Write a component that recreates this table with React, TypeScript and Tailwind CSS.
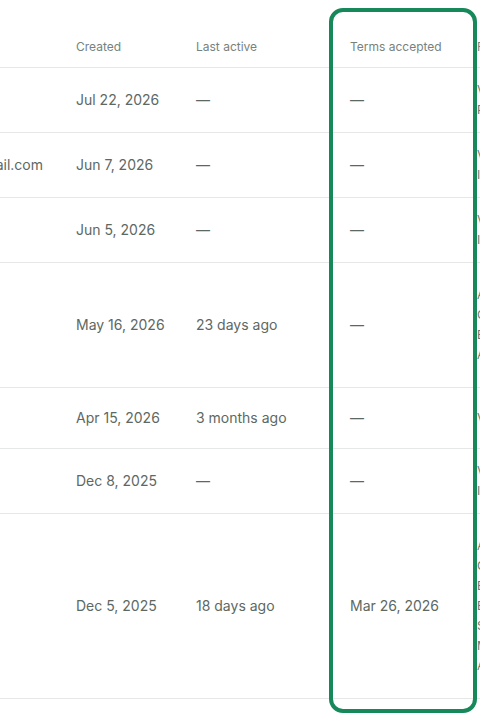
const rows = [
  { email: 'ana@acme.io', created: 'Jul 22, 2026', active: '—', terms: '—', h: 'h-[65px]', notes: ['Viewer', 'Pending'] },
  { email: 'jordan.lee@gmail.com', created: 'Jun 7, 2026', active: '—', terms: '—', h: 'h-[65px]', notes: ['Viewer', 'Invited'] },
  { email: 'li@studio.co', created: 'Jun 5, 2026', active: '—', terms: '—', h: 'h-[65px]', notes: ['Viewer', 'Invited'] },
  { email: 'mk@corp.io', created: 'May 16, 2026', active: '23 days ago', terms: '—', h: 'h-[125px]', notes: ['Admin', 'Owner', 'Billing', 'Active'] },
  { email: 'sam@web.dev', created: 'Apr 15, 2026', active: '3 months ago', terms: '—', h: 'h-[61px]', notes: ['Viewer'] },
  { email: 'tom@mail.io', created: 'Dec 8, 2025', active: '—', terms: '—', h: 'h-[65px]', notes: ['Viewer', 'Invited'] },
  { email: 'eve@team.app', created: 'Dec 5, 2025', active: '18 days ago', terms: 'Mar 26, 2026', h: 'h-[185px]', notes: ['Admin', 'Owner', 'Editor', 'Billing', 'Support', 'Member', 'Active'] },
]

export default function App() {
  return (
    <div className="relative w-[480px] h-[720px] overflow-hidden bg-white font-['Inter',sans-serif]">
      <div className="ml-[-120px] w-[760px]">
        {/* header */}
        <div className="flex h-[68px] items-end border-b border-[#e6e8e7] pb-[12px] text-xs text-[#78827d]">
          <div className="w-[180px] pl-4">Email</div>
          <div className="w-[120px] pl-4">Created</div>
          <div className="w-[154px] pl-4">Last active</div>
          <div className="w-[127px] pl-4">Terms accepted</div>
          <div className="flex-1 pl-4">Role</div>
        </div>

        {rows.map((r) => (
          <div key={r.created} className={`flex items-center border-b border-[#e6e8e7] text-sm text-[#5d6863] ${r.h}`}>
            <div className="w-[180px] pl-4 whitespace-nowrap">{r.email}</div>
            <div className="w-[120px] pl-4">{r.created}</div>
            <div className="w-[154px] pl-4">{r.active}</div>
            <div className="w-[127px] pl-4">{r.terms}</div>
            <div className="flex-1 pl-4 flex flex-col text-xs leading-[20px] text-[#6b7571]">
              {r.notes.map((n) => (
                <span key={n}>{n}</span>
              ))}
            </div>
          </div>
        ))}
      </div>

      {/* highlighted column */}
      <div className="absolute left-[329px] top-[8px] w-[148px] h-[705px] rounded-[14px] border-4 border-[#17885a] pointer-events-none" />
    </div>
  )
}
